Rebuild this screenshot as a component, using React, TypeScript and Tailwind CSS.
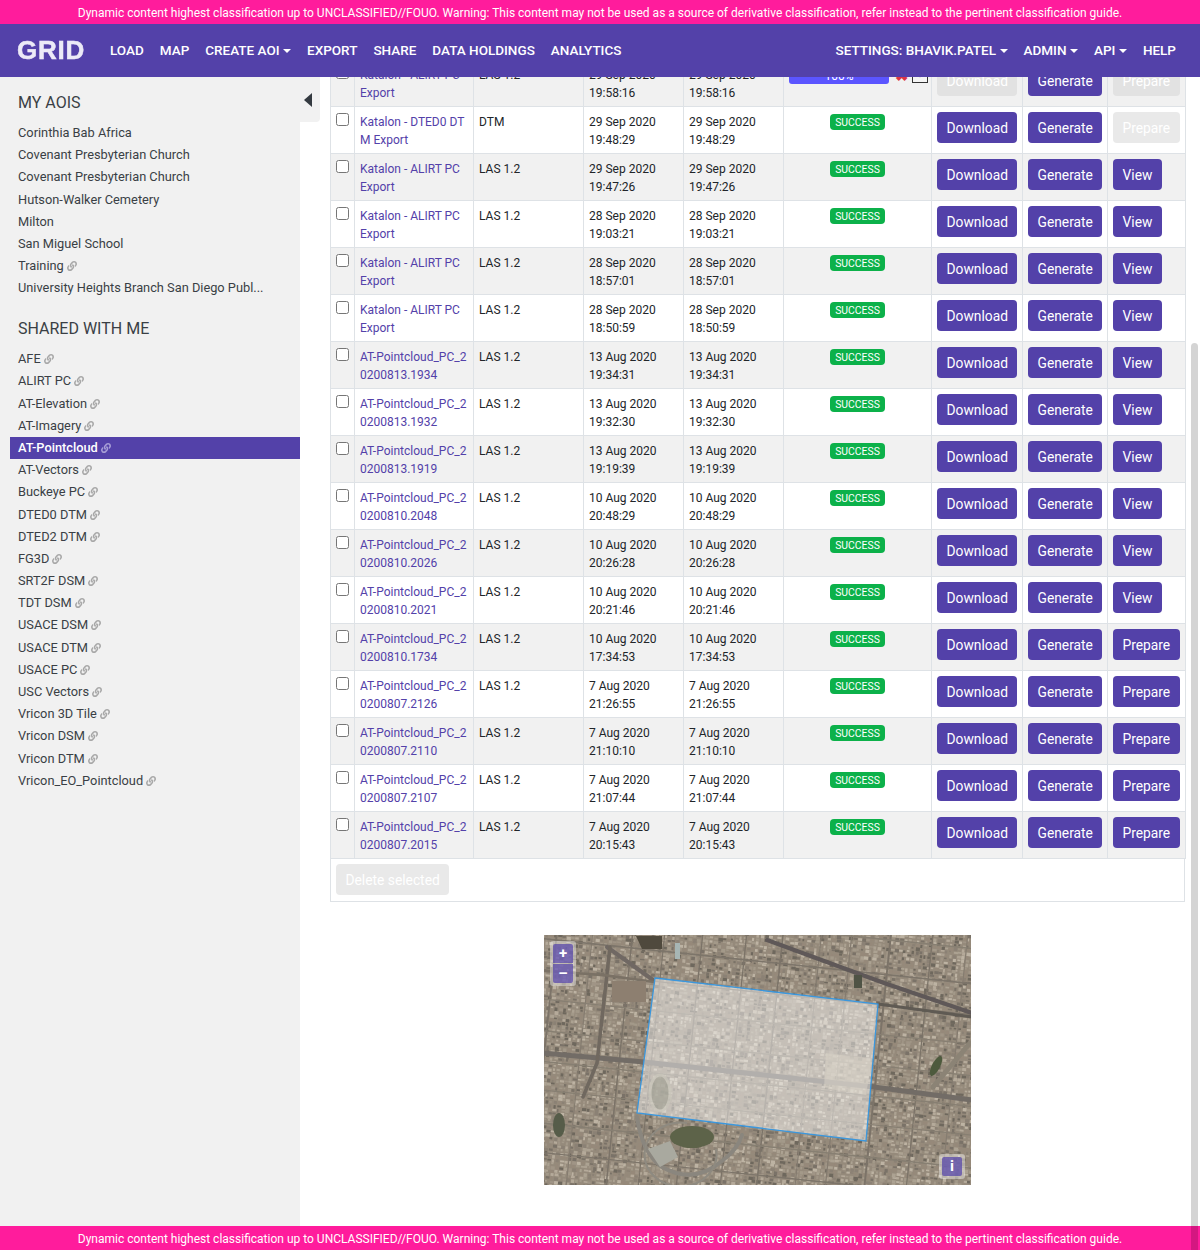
import React from "react";
import { FaLink } from "react-icons/fa";

const BANNER =
  "Dynamic content highest classification up to UNCLASSIFIED//FOUO. Warning: This content may not be used as a source of derivative classification, refer instead to the pertinent classification guide.";

const myAois: [string, boolean][] = [
  ["Corinthia Bab Africa", false],
  ["Covenant Presbyterian Church", false],
  ["Covenant Presbyterian Church", false],
  ["Hutson-Walker Cemetery", false],
  ["Milton", false],
  ["San Miguel School", false],
  ["Training", true],
  ["University Heights Branch San Diego Publ...", false],
];
const shared = [
  "AFE", "ALIRT PC", "AT-Elevation", "AT-Imagery", "AT-Pointcloud", "AT-Vectors", "Buckeye PC", "DTED0 DTM", "DTED2 DTM", "FG3D",
  "SRT2F DSM", "TDT DSM", "USACE DSM", "USACE DTM", "USACE PC", "USC Vectors", "Vricon 3D Tile", "Vricon DSM", "Vricon DTM", "Vricon_EO_Pointcloud",
];

type Row = { a: string; b: string; type: string; d: string; t: string; third: "View" | "Prepare" | "off" };
const A = "Katalon - ALIRT PC";
const P = "AT-Pointcloud_PC_2";
const rows: Row[] = [
  { a: "Katalon - DTED0 DT", b: "M Export", type: "DTM", d: "29 Sep 2020", t: "19:48:29", third: "off" },
  { a: A, b: "Export", type: "LAS 1.2", d: "29 Sep 2020", t: "19:47:26", third: "View" },
  { a: A, b: "Export", type: "LAS 1.2", d: "28 Sep 2020", t: "19:03:21", third: "View" },
  { a: A, b: "Export", type: "LAS 1.2", d: "28 Sep 2020", t: "18:57:01", third: "View" },
  { a: A, b: "Export", type: "LAS 1.2", d: "28 Sep 2020", t: "18:50:59", third: "View" },
  { a: P, b: "0200813.1934", type: "LAS 1.2", d: "13 Aug 2020", t: "19:34:31", third: "View" },
  { a: P, b: "0200813.1932", type: "LAS 1.2", d: "13 Aug 2020", t: "19:32:30", third: "View" },
  { a: P, b: "0200813.1919", type: "LAS 1.2", d: "13 Aug 2020", t: "19:19:39", third: "View" },
  { a: P, b: "0200810.2048", type: "LAS 1.2", d: "10 Aug 2020", t: "20:48:29", third: "View" },
  { a: P, b: "0200810.2026", type: "LAS 1.2", d: "10 Aug 2020", t: "20:26:28", third: "View" },
  { a: P, b: "0200810.2021", type: "LAS 1.2", d: "10 Aug 2020", t: "20:21:46", third: "View" },
  { a: P, b: "0200810.1734", type: "LAS 1.2", d: "10 Aug 2020", t: "17:34:53", third: "Prepare" },
  { a: P, b: "0200807.2126", type: "LAS 1.2", d: "7 Aug 2020", t: "21:26:55", third: "Prepare" },
  { a: P, b: "0200807.2110", type: "LAS 1.2", d: "7 Aug 2020", t: "21:10:10", third: "Prepare" },
  { a: P, b: "0200807.2107", type: "LAS 1.2", d: "7 Aug 2020", t: "21:07:44", third: "Prepare" },
  { a: P, b: "0200807.2015", type: "LAS 1.2", d: "7 Aug 2020", t: "20:15:43", third: "Prepare" },
];

function Caret() {
  return <span className="inline-block ml-[3.5px] align-[2px] w-0 h-0 border-t-[4px] border-t-white border-x-[4px] border-x-transparent" />;
}

function NavItem({ label, caret }: { label: string; caret?: boolean }) {
  return (
    <span className="text-white text-[13.5px] font-medium whitespace-nowrap">
      {label}
      {caret && <Caret />}
    </span>
  );
}

function Btn({ label, off }: { label: string; off?: boolean }) {
  return (
    <span
      className={`inline-flex items-center justify-center h-[31px] pt-[3px] px-[9.5px] rounded-[4px] text-[13.8px] whitespace-nowrap ${
        off ? "bg-[#d3d3d3]/50 text-white" : "bg-[#5341a9] text-white"
      }`}
    >
      {label}
    </span>
  );
}

function SideItem({ label, link, active }: { label: string; link?: boolean; active?: boolean }) {
  return (
    <div
      className={`h-[22.2px] pl-[8px] flex items-center gap-[3px] text-[12.8px] whitespace-nowrap ${
        active ? "bg-[#5341a9] text-white font-medium" : "text-[#3a3f45]"
      }`}
    >
      {label}
      {link && <FaLink size={10} className={active ? "text-[#a79ed6]" : "text-[#a8a8a8]"} />}
    </div>
  );
}

const td = "border border-[#dee2e6] align-top p-0";

function Cells({ a, b, type, d, t, status, third, first }: { a: string; b: string; type: string; d: string; t: string; status: React.ReactNode; third: Row["third"]; first?: boolean }) {
  return (
    <>
      <td className={td}>
        <div className="pl-[5px] pt-[6px] leading-none"><input type="checkbox" className="m-0" readOnly /></div>
      </td>
      <td className={td}>
        <div className="pl-[5px] pt-[6px] text-[#5341a9] whitespace-nowrap overflow-hidden">{a}<br />{b}</div>
      </td>
      <td className={td}><div className="pl-[5px] pt-[6px]">{type}</div></td>
      <td className={td}><div className="pl-[5px] pt-[6px]">{d}<br />{t}</div></td>
      <td className={td}><div className="pl-[5px] pt-[6px]">{d}<br />{t}</div></td>
      <td className={td}>{status}</td>
      <td className={td}><div className="pl-[5px] pt-[5px] leading-none"><Btn label="Download" off={first} /></div></td>
      <td className={td}><div className="pl-[5px] pt-[5px] leading-none"><Btn label="Generate" /></div></td>
      <td className={td}>
        <div className="pl-[5px] pt-[5px] leading-none">
          {third === "off" ? <Btn label="Prepare" off /> : <Btn label={third} />}
        </div>
      </td>
    </>
  );
}

function mulberry(seed: number) {
  return () => {
    seed |= 0;
    seed = (seed + 0x6d2b79f5) | 0;
    let t = Math.imul(seed ^ (seed >>> 15), 1 | seed);
    t = (t + Math.imul(t ^ (t >>> 7), 61 | t)) ^ t;
    return ((t ^ (t >>> 14)) >>> 0) / 4294967296;
  };
}

function MapArt() {
  const r = mulberry(77);
  const shades = ["#aca292", "#a09586", "#96897a", "#b5aa9a", "#8b8174", "#7a7267", "#bdb3a3", "#a39989", "#6e675d"];
  const bits: React.ReactNode[] = [];
  for (let y = -40; y < 300; y += 3.6) {
    for (let x = -40; x < 470; x += 4.2) {
      const c = shades[Math.floor(r() * shades.length)];
      bits.push(<rect key={`${x}-${y}`} x={x + r()} y={y + r()} width={1.6 + r() * 3} height={1.4 + r() * 2.4} fill={c} />);
    }
  }
  const streets: React.ReactNode[] = [];
  for (let x = -40; x < 470; x += 37) {
    streets.push(<path key={`v${x}`} d={`M${x + r() * 8} -40V300`} stroke={r() > 0.5 ? "#7b7368" : "#857c70"} strokeWidth={1 + r()} />);
  }
  for (let y = -40; y < 300; y += 31) {
    streets.push(<path key={`h${y}`} d={`M-40 ${y + r() * 6}H470`} stroke={r() > 0.5 ? "#7d756a" : "#877f72"} strokeWidth={0.9 + r()} />);
  }
  return (
    <svg viewBox="0 0 427 250" className="block w-[427px] h-[250px]">
      <defs>
        <filter id="soft"><feGaussianBlur stdDeviation="0.7" /></filter>
      </defs>
      <rect width="427" height="250" fill="#958a7b" />
      <g filter="url(#soft)">
        <g transform="rotate(6 213 125)">
          {bits}
          {streets}
        </g>
        <g fill="none" strokeLinecap="round" strokeLinejoin="round">
          <path d="M-2 118L100 127L330 152L428 165" stroke="#726c66" strokeWidth="5" />
          <path d="M223 5L340 48L428 78" stroke="#5e5958" strokeWidth="4" />
          <path d="M63 12L109 45" stroke="#6f6864" strokeWidth="4" />
          <path d="M66 12L53 128L39 162" stroke="#6f685f" strokeWidth="3.5" />
          <path d="M0 36L60 40L110 47" stroke="#7a7165" strokeWidth="2.5" />
          <path d="M334 69L428 82" stroke="#5f5a53" strokeWidth="3" />
          <path d="M93 182Q98 218 118 232Q150 250 178 226Q194 214 198 200" stroke="#8a867e" strokeWidth="4" />
          <path d="M426 108L389 152" stroke="#8b8375" strokeWidth="5" />
        </g>
        <ellipse cx="148" cy="202" rx="22" ry="11" fill="#5d6349" />
        <path d="M143 188A36 32 0 1 0 172 214" fill="none" stroke="#8e8a80" strokeWidth="2" />
        <path d="M104 214L126 206L134 222L116 232Z" fill="#a9a99f" />
        <ellipse cx="15" cy="190" rx="6" ry="12" fill="#565c49" />
        <ellipse cx="392" cy="131" rx="4" ry="11" fill="#4d5a3c" transform="rotate(28 392 131)" />
        <path d="M92 1h26v13H98Z" fill="#4f493c" />
        <rect x="68" y="46" width="34" height="21" fill="#8d7f70" />
        <rect x="310" y="40" width="8" height="13" fill="#4f5344" />
        <rect x="131" y="8" width="5" height="16" fill="#a7b6b4" />
      </g>
      <polygon points="111,43 334,69 322,206 93,178" fill="#ffffff" fillOpacity="0.46" stroke="#3b97dd" strokeWidth="1.3" />
      <polygon points="282,118 328,124 322,160 280,153" fill="#d9d4c8" fillOpacity="0.5" />
      <ellipse cx="116" cy="158" rx="10" ry="18" fill="#a3a295" stroke="#c9c6ba" strokeWidth="3" opacity="0.7" />
    </svg>
  );
}

function MapBtn({ children, cls }: { children: React.ReactNode; cls: string }) {
  return <span className={`flex items-center justify-center w-[20px] h-[19px] bg-[#5341a9]/70 text-white font-bold text-[15px] leading-none ${cls}`}>{children}</span>;
}

export default function App() {
  return (
    <div className="relative h-[1250px] w-[1200px] overflow-hidden flex flex-col bg-white text-[12px] leading-[18px] text-[#212529] font-['Roboto',sans-serif]">
      <div className="h-[24px] shrink-0 pt-px bg-[#ff1c9c] text-white text-[12px] flex items-center justify-center whitespace-nowrap">{BANNER}</div>
      <nav className="h-[53px] shrink-0 pb-[2px] bg-[#5341a9] flex items-center pl-[17px] pr-[24px] relative z-10">
        <span className="w-[93px] text-[26px] font-bold leading-none tracking-[0.8px] text-[#eceaf7] blur-[0.6px] [-webkit-text-stroke:0.5px_#eceaf7] font-['Liberation_Sans',sans-serif]">GRID</span>
        <div className="flex gap-[16px]">
          <NavItem label="LOAD" />
          <NavItem label="MAP" />
          <NavItem label="CREATE AOI" caret />
          <NavItem label="EXPORT" />
          <NavItem label="SHARE" />
          <NavItem label="DATA HOLDINGS" />
          <NavItem label="ANALYTICS" />
        </div>
        <div className="ml-auto flex gap-[16px]">
          <NavItem label="SETTINGS: BHAVIK.PATEL" caret />
          <NavItem label="ADMIN" caret />
          <NavItem label="API" caret />
          <NavItem label="HELP" />
        </div>
      </nav>

      <div className="flex-1 min-h-0 flex relative">
        <aside className="w-[300px] shrink-0 bg-[#f1f1f1] pl-[10px]">
          <h2 className="pl-[8px] mt-[15px] mb-[8px] text-[16px] leading-[22px] text-[#3a3f45] font-normal">MY AOIS</h2>
          {myAois.map(([l, k], i) => <SideItem key={i} label={l} link={k} />)}
          <h2 className="pl-[8px] mt-[18.6px] mb-[8px] text-[16px] leading-[22px] text-[#3a3f45] font-normal">SHARED WITH ME</h2>
          {shared.map((l) => <SideItem key={l} label={l} link active={l === "AT-Pointcloud"} />)}
        </aside>

        <span className="absolute left-[300px] top-0 w-[20px] h-[45px] bg-[#f1f1f1] rounded-br-[4px] z-[5] flex items-center justify-center pr-[4px]">
          <span className="w-0 h-0 border-y-[7px] border-y-transparent border-r-[8px] border-r-[#343a40]" />
        </span>

        <main className="flex-1 min-w-0 overflow-hidden pl-[30px] pr-[15px]">
          <div className="-mt-[18px] w-[855px]">
            <table className="w-[855px] table-fixed border-collapse border border-[#dee2e6]">
              <colgroup>
                <col className="w-[24px]" />
                <col className="w-[119px]" />
                <col className="w-[110px]" />
                <col className="w-[100px]" />
                <col className="w-[100px]" />
                <col className="w-[148px]" />
                <col className="w-[91px]" />
                <col className="w-[85px]" />
                <col className="w-[78px]" />
              </colgroup>
              <tbody>
                <tr className="h-[47px] bg-[#f1f1f1]">
                  <Cells
                    first
                    a={A}
                    b="Export"
                    type="LAS 1.2"
                    d="29 Sep 2020"
                    t="19:58:16"
                    third="off"
                    status={
                      <div className="pl-[5px] pt-[8px] flex items-center">
                        <span className="w-[100px] h-[16px] rounded-[3px] bg-[#5b55ff] text-white text-[12px] leading-[16px] text-center">100%</span>
                        <span className="ml-[6px] text-[#dc3545] text-[16px] font-bold leading-none">✖</span>
                        <svg viewBox="0 0 16 13" className="ml-[4px] w-[16px] h-[13px]"><rect x="0.5" y="0.5" width="15" height="12" fill="#f4f4f4" stroke="#333" /><path d="M1 1l7 6 7-6" fill="none" stroke="#333" /></svg>
                      </div>
                    }
                  />
                </tr>
                {rows.map((row, i) => (
                  <tr key={i} className={`h-[47px] ${i % 2 === 0 ? "bg-white" : "bg-[#f1f1f1]"}`}>
                    <Cells
                      {...row}
                      status={
                        <div className="pt-[7px] flex justify-center">
                          <span className="w-[55px] h-[16px] rounded-[4px] bg-[#0cb14a] text-white text-[10.4px] leading-[17px] text-center">SUCCESS</span>
                        </div>
                      }
                    />
                  </tr>
                ))}
              </tbody>
            </table>
            <div className="h-[43px] border border-t-0 border-[#dee2e6] pl-[5px] pt-[5px] leading-none">
              <Btn label="Delete selected" off />
            </div>
            <div className="mt-[33px] ml-[214px] w-[427px] h-[250px] relative">
              <MapArt />
              <div className="absolute left-[6px] top-[6px] p-[3px] rounded-[3px] bg-white/40 flex flex-col gap-[1px]">
                <MapBtn cls="rounded-t-[2px]">+</MapBtn>
                <MapBtn cls="rounded-b-[2px]">–</MapBtn>
              </div>
              <div className="absolute right-[6px] bottom-[6px] p-[3px] rounded-[3px] bg-white/40">
                <MapBtn cls="rounded-[2px]">i</MapBtn>
              </div>
            </div>
          </div>
        </main>
      </div>

      <div className="h-[24px] shrink-0 pt-px bg-[#ff1c9c] text-white text-[12px] flex items-center justify-center whitespace-nowrap relative">{BANNER}</div>
      <span className="absolute left-[1191px] top-[343px] w-[7px] h-[907px] rounded-t-[4px] bg-black/[0.17]" />
    </div>
  );
}
